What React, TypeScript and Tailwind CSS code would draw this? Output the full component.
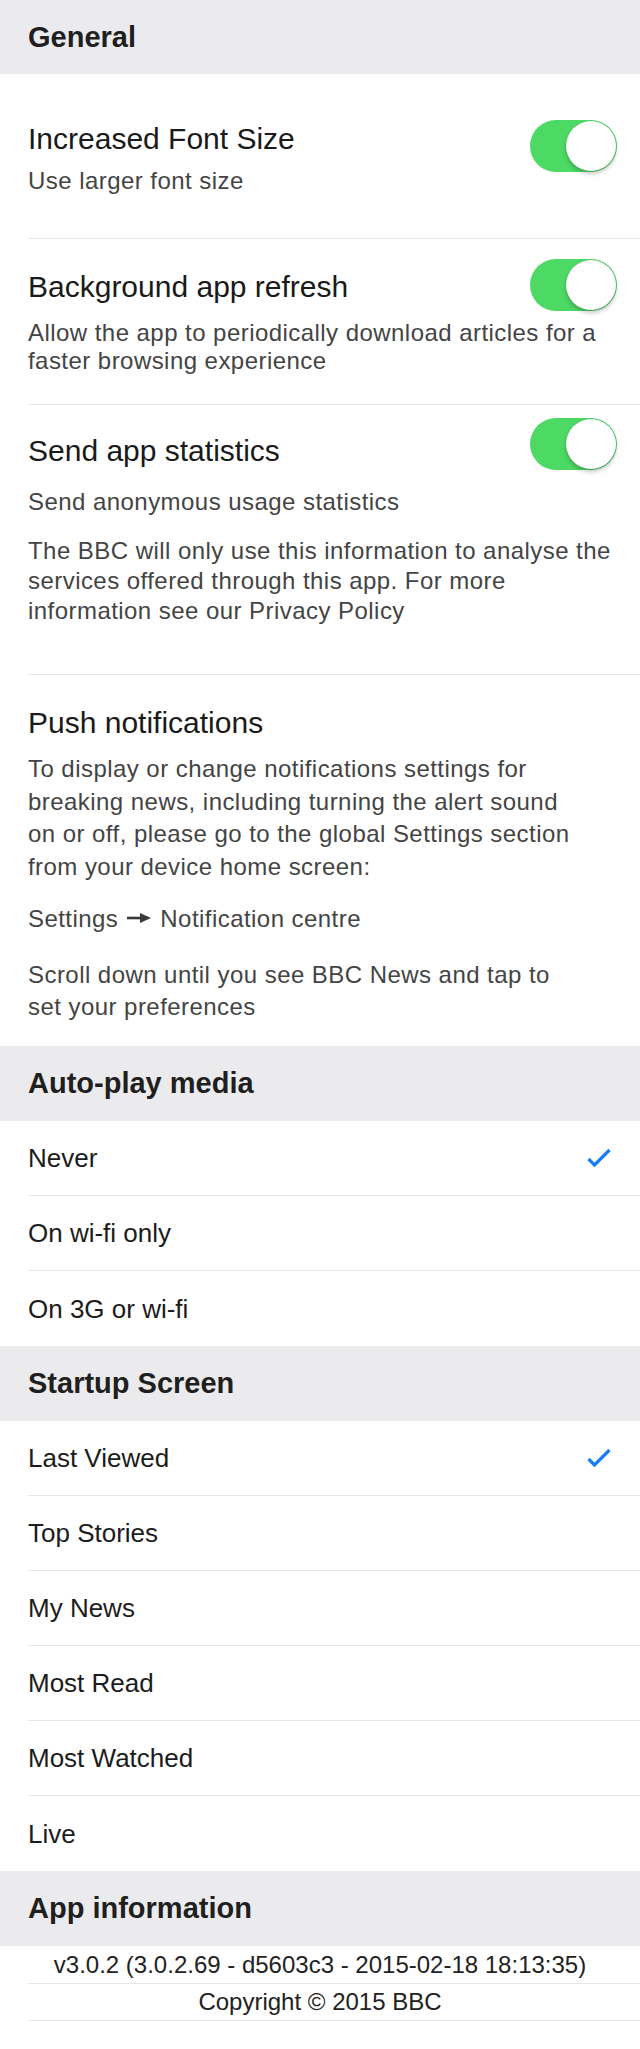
import React from "react";

const font = "font-['Liberation_Sans',Arial,Helvetica,sans-serif]";

function Toggle() {
  return (
    <div className="relative h-[52px] w-[87px] shrink-0 rounded-full bg-[#4cd964]">
      <div className="absolute right-[1px] top-[1px] h-[50px] w-[50px] rounded-full bg-white shadow-[0_3px_4px_rgba(0,0,0,0.22),0_0_0_0.5px_rgba(0,0,0,0.08)]" />
    </div>
  );
}

function SectionHeader({ children }: { children: React.ReactNode }) {
  return (
    <div className="h-[75px] bg-[#ebebed] pl-[28px] text-[29px] font-bold leading-[75px] text-[#1f1f1f]">
      {children}
    </div>
  );
}

function Check() {
  return (
    <svg width="26" height="20" viewBox="0 0 26 20" fill="none">
      <path d="M2.5 11 L8.5 17 L23.5 2" stroke="#157efb" strokeWidth="3.2" strokeLinecap="butt" strokeLinejoin="miter" />
    </svg>
  );
}

function Arrow() {
  return (
    <svg className="mx-[9px] inline-block align-[3px]" width="24" height="12" viewBox="0 0 24 12" fill="none">
      <path d="M0 6 H15" stroke="#3a3a3a" strokeWidth="2.6" />
      <path d="M13 1 L24 6 L13 11 Z" fill="#3a3a3a" />
    </svg>
  );
}

function ListRow({ label, checked, last }: { label: string; checked?: boolean; last?: boolean }) {
  return (
    <div
      className={
        "ml-[28px] flex h-[75px] items-center justify-between pr-[28px] " +
        (last ? "" : "border-b border-[#e6e6e8]")
      }
    >
      <span className="text-[26px] leading-[74px] text-[#1c1c1c]">{label}</span>
      {checked ? <Check /> : null}
    </div>
  );
}

export default function App() {
  const title = "text-[30px] leading-[36px] text-[#1a1a1a]";
  const body = "text-[24px] tracking-[0.45px] text-[#444444]";
  return (
    <div className={"w-[640px] bg-white " + font}>
      <div className="h-[74px] bg-[#ebebed] pl-[28px] text-[29px] font-bold leading-[74px] text-[#1f1f1f]">
        General
      </div>

      {/* Row 1 */}
      <div className="ml-[28px] border-b border-[#e6e6e8] pb-[42px] pr-[23px] pt-[46px]">
        <div className="flex items-start justify-between">
          <div className="flex flex-col">
            <div className={title + " mt-[1px]"}>Increased Font Size</div>
            <div className={body + " mt-[9px] leading-[30px]"}>Use larger font size</div>
          </div>
          <Toggle />
        </div>
      </div>

      {/* Row 2 */}
      <div className="ml-[28px] border-b border-[#e6e6e8] pb-[29px] pr-[23px] pt-[20px]">
        <div className="flex items-start justify-between">
          <div className={title + " mt-[10px]"}>Background app refresh</div>
          <Toggle />
        </div>
        <div className={body + " mt-[8px] leading-[28px]"}>
          Allow the app to periodically download articles for a
          <br />
          faster browsing experience
        </div>
      </div>

      {/* Row 3 */}
      <div className="ml-[28px] border-b border-[#e6e6e8] pb-[48px] pr-[23px] pt-[13px]">
        <div className="flex items-start justify-between">
          <div className={title + " mt-[15px]"}>Send app statistics</div>
          <Toggle />
        </div>
        <div className={body + " mt-[17px] leading-[30px]"}>Send anonymous usage statistics</div>
        <div className={body + " mt-[19px] leading-[30px]"}>
          The BBC will only use this information to analyse the
          <br />
          services offered through this app. For more
          <br />
          information see our Privacy Policy
        </div>
      </div>

      {/* Row 4 */}
      <div className="pb-[22.5px] pl-[28px] pr-[23px] pt-[30px]">
        <div className={title}>Push notifications</div>
        <div className={body + " mt-[12px] leading-[32.5px]"}>
          To display or change notifications settings for
          <br />
          breaking news, including turning the alert sound
          <br />
          on or off, please go to the global Settings section
          <br />
          from your device home screen:
        </div>
        <div className={body + " mt-[20px] leading-[32.5px]"}>
          Settings
          <Arrow />
          Notification centre
        </div>
        <div className={body + " mt-[23px] leading-[32.5px]"}>
          Scroll down until you see BBC News and tap to
          <br />
          set your preferences
        </div>
      </div>

      <SectionHeader>Auto-play media</SectionHeader>
      <ListRow label="Never" checked />
      <ListRow label="On wi-fi only" />
      <ListRow label="On 3G or wi-fi" last />

      <SectionHeader>Startup Screen</SectionHeader>
      <ListRow label="Last Viewed" checked />
      <ListRow label="Top Stories" />
      <ListRow label="My News" />
      <ListRow label="Most Read" />
      <ListRow label="Most Watched" />
      <ListRow label="Live" last />

      <SectionHeader>App information</SectionHeader>
      <div className="flex h-[37px] items-center justify-center text-[24px] leading-[37px] text-[#222]">
        v3.0.2 (3.0.2.69 - d5603c3 - 2015-02-18 18:13:35)
      </div>
      <div className="ml-[28px] h-px bg-[#e6e6e8]" />
      <div className="flex h-[36px] items-center justify-center text-[24px] leading-[36px] text-[#222]">
        Copyright © 2015 BBC
      </div>
      <div className="ml-[28px] h-px bg-[#e6e6e8]" />
      <div className="h-[28px]" />
    </div>
  );
}
